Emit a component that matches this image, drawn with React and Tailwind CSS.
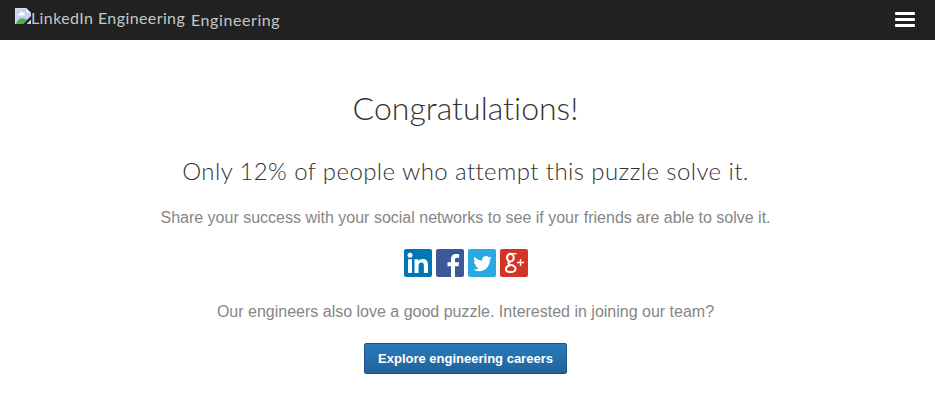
function BrokenImage() {
  return (
    <svg className="h-4 w-4 shrink-0" viewBox="0 0 16 16">
      <path d="M0 0h11l5 5v3L8 16H0z" fill="#c3d3f7" />
      <path d="M0.500 16V0.500H11" fill="none" stroke="#dcdcdc" />
      <path d="M3 7.500c0-2 1.500-2 2-2.500 1-2 3.500-1 3.500 0 1.500 0 1.500 2 1 2.500z" fill="#fff" />
      <path d="M1 16c1-4 4-6 6.500-5.500 2 0 3.500.5 4 1.500L8 16z" fill="#52ad3d" />
      <path d="M11 0v5h5z" fill="#fff" stroke="#b5b5b5" strokeWidth=".5" />
      <path d="M11.500 16 16 11.500V16z" fill="#d4d4d4" />
    </svg>
  );
}

function LinkedIn() {
  return (
    <svg className="h-7 w-7" viewBox="0 0 28 28">
      <rect width="28" height="28" rx="2" fill="#0077b5" />
      <g fill="#fff">
        <circle cx="6" cy="6.300" r="2.500" />
        <path d="M4 10.300h4V24H4zM10.500 10.300h3.900v1.900c.8-1.400 2.300-2.300 4.300-2.300 4.100 0 5.300 2.600 5.300 6.500V24h-4.100v-6.800c0-1.900-.4-3.600-2.500-3.600s-2.800 1.500-2.800 3.500V24h-4.100z" />
      </g>
    </svg>
  );
}

function Facebook() {
  return (
    <svg className="h-7 w-7" viewBox="0 0 28 28">
      <rect width="28" height="28" rx="2" fill="#3b5998" />
      <path d="M15 28V17.200h-3.500V13.300H15v-3c0-3.600 2.100-5.300 5.200-5.300 1.500 0 2.600.1 3 .2v3.600H21c-1.700 0-2 .8-2 2v2.500h4.100l-.5 3.900H19V28z" fill="#fff" />
    </svg>
  );
}

function Twitter() {
  return (
    <svg className="h-7 w-7" viewBox="0 0 28 28">
      <rect width="28" height="28" rx="2" fill="#29a9e1" />
      <path transform="translate(5.200 5.400) scale(.77)" d="M23.950 4.570a10 10 0 0 1-2.820.77 4.960 4.960 0 0 0 2.160-2.720c-.95.550-2 .95-3.130 1.180a4.920 4.920 0 0 0-8.380 4.480C7.690 8.100 4.070 6.130 1.640 3.160a4.820 4.820 0 0 0-.67 2.480c0 1.710.87 3.210 2.190 4.100a4.900 4.900 0 0 1-2.230-.62v.06a4.920 4.920 0 0 0 3.950 4.830 5 5 0 0 1-2.210.08 4.940 4.940 0 0 0 4.600 3.420A9.870 9.870 0 0 1 0 19.540a14 14 0 0 0 7.550 2.210c9.050 0 14-7.500 14-13.980 0-.21 0-.42-.02-.63a9.940 9.940 0 0 0 2.420-2.570z" fill="#fff" />
    </svg>
  );
}

function GooglePlus() {
  return (
    <svg className="h-7 w-7" viewBox="0 0 28 28">
      <rect width="28" height="28" rx="2" fill="#d23427" />
      <g fill="none" stroke="#fff">
        <ellipse cx="10.400" cy="8.700" rx="3.300" ry="3.800" strokeWidth="2.100" />
        <path d="M11.500 4.700h5.200" strokeWidth="1.300" />
        <path d="M9.500 12.500c-1.700 1.200-1.700 2.500.5 3.100 3 .8 5.600 1.300 5.600 3.900 0 2.200-2.100 3.500-5 3.500s-4.700-1.300-4.700-3.100c0-1.700 1.500-2.900 4.200-3.400" strokeWidth="1.900" />
        <path d="M20.500 10v7M17 13.500h7" strokeWidth="1.300" />
      </g>
    </svg>
  );
}

export default function App() {
  return (
    <div className="min-h-[417px] bg-white font-['Liberation_Sans',Arial,sans-serif]">
      <header className="flex h-10 items-start justify-between bg-[#212121] pr-5 pl-[15px] font-[Lato,sans-serif] text-base text-[#c4c8c8]">
        <div className="flex">
          <div className="flex pt-2">
            <BrokenImage />
            <span className="-mt-px w-[154px] text-[16px] leading-[22px] tracking-[0.4px] whitespace-nowrap">LinkedIn Engineering</span>
          </div>
          <span className="ml-[6px] pt-[9px] text-[16px] leading-[22px] tracking-[0.58px]">Engineering</span>
        </div>
        <button aria-label="Menu" className="mt-3 flex w-5 flex-col gap-[3px]">
          <span className="h-[3px] w-full rounded-[1px] bg-white" />
          <span className="h-[3px] w-full rounded-[1px] bg-white" />
          <span className="h-[3px] w-full rounded-[1px] bg-white" />
        </button>
      </header>
      <main className="flex flex-col items-center pr-1 text-center whitespace-nowrap text-[#868686]">
        <h1 className="mt-12 font-[Lato,sans-serif] text-[32px] leading-10 font-light tracking-[0.01px] text-[#333] [font-variant-ligatures:none]">Congratulations!</h1>
        <h2 className="mt-[27px] font-[Lato,sans-serif] text-2xl leading-8 font-light tracking-[0.41px] text-[#333]">Only 12% of people who attempt this puzzle solve it.</h2>
        <p className="mt-[19px] text-base leading-6">Share your success with your social networks to see if your friends are able to solve it.</p>
        <div className="mt-[19px] flex gap-1">
          <LinkedIn />
          <Facebook />
          <Twitter />
          <GooglePlus />
        </div>
        <p className="mt-[23px] text-base leading-6">Our engineers also love a good puzzle. Interested in joining our team?</p>
        <button className="mt-[19px] h-[31px] w-[203px] rounded-[2px] border border-[#1d5382] bg-linear-to-b from-[#287bbc] to-[#23639a] text-[13px] leading-none font-bold text-white">Explore engineering careers</button>
      </main>
    </div>
  );
}
